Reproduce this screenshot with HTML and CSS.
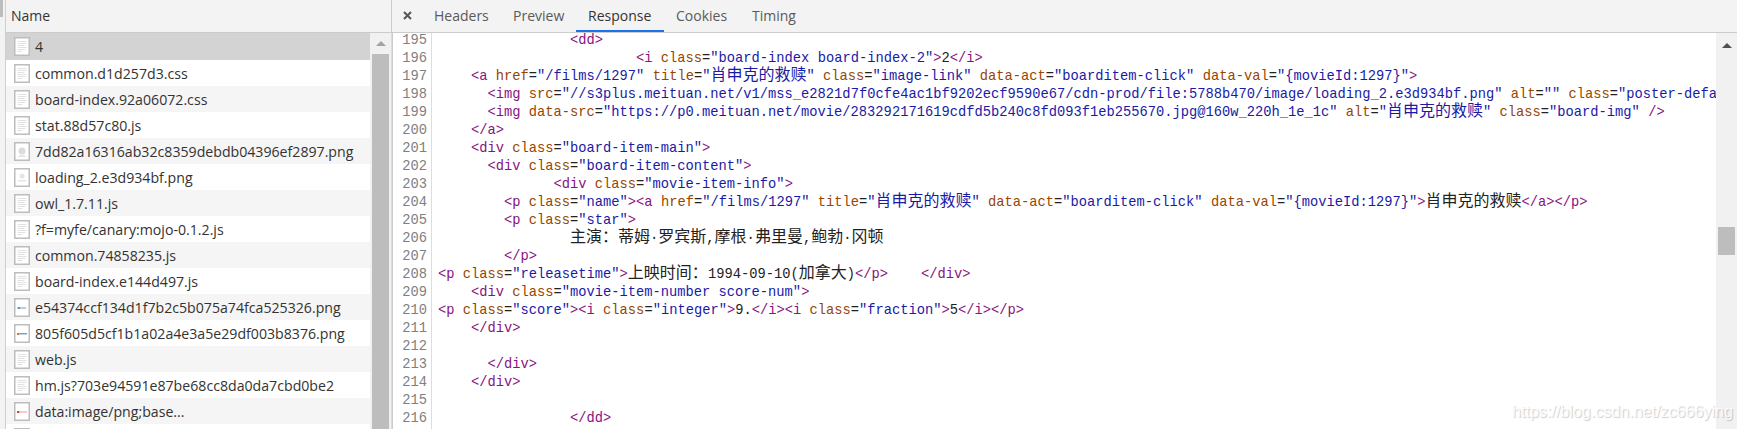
FILE: index.html
```html
<!DOCTYPE html>
<html lang="zh">
<head>
<meta charset="utf-8">
<title>Network Response</title>
<link rel="stylesheet" href="styles.css">
</head>
<body>
<svg class="defs" width="0" height="0" aria-hidden="true">
  <symbol id="doc" viewBox="0 0 16 19">
    <rect x=".75" y=".75" width="14.5" height="17.5" fill="#fff" stroke="#bdbdbd" stroke-width="1.5"/>
    <path d="M3.5 4.5h9M3.5 6.5h9M3.5 8.5h7M3.5 10.5h9M3.5 12.5h8M3.5 14.5h5" stroke="#e2e2e2" stroke-width="1" fill="none"/>
  </symbol>
  <symbol id="frame" viewBox="0 0 16 19">
    <rect x=".75" y=".75" width="14.5" height="17.5" fill="#fff" stroke="#bdbdbd" stroke-width="1.5"/>
  </symbol>
</svg>
<div class="strip"><div class="strip-mark"></div></div>
<section class="left">
  <header class="name-head">Name</header>
  <div class="list-wrap">
    <ul class="files">
      <li class="file selected"><svg class="ico"><use href="#doc"/></svg><span>4</span></li>
      <li class="file"><svg class="ico"><use href="#doc"/></svg><span>common.d1d257d3.css</span></li>
      <li class="file"><svg class="ico"><use href="#doc"/></svg><span>board-index.92a06072.css</span></li>
      <li class="file"><svg class="ico"><use href="#doc"/></svg><span>stat.88d57c80.js</span></li>
      <li class="file"><svg class="ico" viewBox="0 0 16 19"><use href="#frame"/><circle cx="8" cy="9" r="3.5" fill="#dcdcdc"/><path d="M4 15c1-3 7-3 8 0" fill="#e6e6e6"/></svg><span>7dd82a16316ab32c8359debdb04396ef2897.png</span></li>
      <li class="file"><svg class="ico" viewBox="0 0 16 19"><use href="#frame"/><circle cx="8" cy="8" r="2.5" fill="#e4e4e4"/><path d="M4 12h8v1.500H4z" fill="#e4e4e4"/></svg><span>loading_2.e3d934bf.png</span></li>
      <li class="file"><svg class="ico"><use href="#doc"/></svg><span>owl_1.7.11.js</span></li>
      <li class="file"><svg class="ico"><use href="#doc"/></svg><span>?f=myfe/canary:mojo-0.1.2.js</span></li>
      <li class="file"><svg class="ico"><use href="#doc"/></svg><span>common.74858235.js</span></li>
      <li class="file"><svg class="ico"><use href="#doc"/></svg><span>board-index.e144d497.js</span></li>
      <li class="file"><svg class="ico" viewBox="0 0 16 19"><use href="#frame"/><path d="M3.500 9h3v2h-3z" fill="#5a9fd4"/><path d="M7 9h5v2H7z" fill="#c9c9c9"/></svg><span>e54374ccf134d1f7b2c5b075a74fca525326.png</span></li>
      <li class="file"><svg class="ico" viewBox="0 0 16 19"><use href="#frame"/><path d="M3 9h2v2H3z" fill="#e8702a"/><path d="M5 9h8v1.500H5z" fill="#6ea6dc"/></svg><span>805f605d5cf1b1a02a4e3a5e29df003b8376.png</span></li>
      <li class="file"><svg class="ico"><use href="#doc"/></svg><span>web.js</span></li>
      <li class="file"><svg class="ico"><use href="#doc"/></svg><span>hm.js?703e94591e87be68cc8da0da7cbd0be2</span></li>
      <li class="file"><svg class="ico" viewBox="0 0 16 19"><use href="#frame"/><path d="M3 9h2.500v2H3z" fill="#e0403a"/><path d="M6 9.500h7v1H6z" fill="#ee9a96"/></svg><span>data:image/png;base...</span></li>
      <li class="file"><svg class="ico"><use href="#doc"/></svg></li>
    </ul>
    <div class="vbar list-bar">
      <div class="arrow pale"></div>
      <div class="thumb list-thumb"></div>
    </div>
  </div>
</section>
<section class="right">
  <nav class="tabs">
    <span class="close"><svg class="close-ico" viewBox="0 0 9 9"><path d="M1 1l7 7M8 1L1 8"/></svg></span>
    <span class="tab tab-headers">Headers</span>
    <span class="tab tab-preview">Preview</span>
    <span class="tab tab-response active">Response</span>
    <span class="tab tab-cookies">Cookies</span>
    <span class="tab tab-timing">Timing</span>
  </nav>
  <div class="editor">
    <div class="gutter">
      <div>195</div><div>196</div><div>197</div><div>198</div><div>199</div><div>200</div><div>201</div><div>202</div><div>203</div><div>204</div><div>205</div><div>206</div><div>207</div><div>208</div><div>209</div><div>210</div><div>211</div><div>212</div><div>213</div><div>214</div><div>215</div><div>216</div>
    </div>
    <div class="code">
      <div class="ln">                <i class="t">&lt;dd&gt;</i></div>
      <div class="ln">                        <i class="t">&lt;i</i> <i class="a">class</i>=<i class="v">"board-index board-index-2"</i><i class="t">&gt;</i>2<i class="t">&lt;/i&gt;</i></div>
      <div class="ln">    <i class="t">&lt;a</i> <i class="a">href</i>=<i class="v">"/films/1297"</i> <i class="a">title</i>=<i class="v">"<b>肖申克的救赎</b>"</i> <i class="a">class</i>=<i class="v">"image-link"</i> <i class="a">data-act</i>=<i class="v">"boarditem-click"</i> <i class="a">data-val</i>=<i class="v">"{movieId:1297}"</i><i class="t">&gt;</i></div>
      <div class="ln">      <i class="t">&lt;img</i> <i class="a">src</i>=<i class="v">"//s3plus.meituan.net/v1/mss_e2821d7f0cfe4ac1bf9202ecf9590e67/cdn-prod/file:5788b470/image/loading_2.e3d934bf.png"</i> <i class="a">alt</i>=<i class="v">""</i> <i class="a">class</i>=<i class="v">"poster-default"</i> <i class="t">/&gt;</i></div>
      <div class="ln">      <i class="t">&lt;img</i> <i class="a">data-src</i>=<i class="v">"https://p0.meituan.net/movie/283292171619cdfd5b240c8fd093f1eb255670.jpg@160w_220h_1e_1c"</i> <i class="a">alt</i>=<i class="v">"<b>肖申克的救赎</b>"</i> <i class="a">class</i>=<i class="v">"board-img"</i> <i class="t">/&gt;</i></div>
      <div class="ln">    <i class="t">&lt;/a&gt;</i></div>
      <div class="ln">    <i class="t">&lt;div</i> <i class="a">class</i>=<i class="v">"board-item-main"</i><i class="t">&gt;</i></div>
      <div class="ln">      <i class="t">&lt;div</i> <i class="a">class</i>=<i class="v">"board-item-content"</i><i class="t">&gt;</i></div>
      <div class="ln">              <i class="t">&lt;div</i> <i class="a">class</i>=<i class="v">"movie-item-info"</i><i class="t">&gt;</i></div>
      <div class="ln">        <i class="t">&lt;p</i> <i class="a">class</i>=<i class="v">"name"</i><i class="t">&gt;&lt;a</i> <i class="a">href</i>=<i class="v">"/films/1297"</i> <i class="a">title</i>=<i class="v">"<b>肖申克的救赎</b>"</i> <i class="a">data-act</i>=<i class="v">"boarditem-click"</i> <i class="a">data-val</i>=<i class="v">"{movieId:1297}"</i><i class="t">&gt;</i><b>肖申克的救赎</b><i class="t">&lt;/a&gt;&lt;/p&gt;</i></div>
      <div class="ln">        <i class="t">&lt;p</i> <i class="a">class</i>=<i class="v">"star"</i><i class="t">&gt;</i></div>
      <div class="ln">                <b>主演：蒂姆</b>·<b>罗宾斯</b>,<b>摩根</b>·<b>弗里曼</b>,<b>鲍勃</b>·<b>冈顿</b></div>
      <div class="ln">        <i class="t">&lt;/p&gt;</i></div>
      <div class="ln"><i class="t">&lt;p</i> <i class="a">class</i>=<i class="v">"releasetime"</i><i class="t">&gt;</i><b>上映时间：</b>1994-09-10(<b>加拿大</b>)<i class="t">&lt;/p&gt;</i>    <i class="t">&lt;/div&gt;</i></div>
      <div class="ln">    <i class="t">&lt;div</i> <i class="a">class</i>=<i class="v">"movie-item-number score-num"</i><i class="t">&gt;</i></div>
      <div class="ln"><i class="t">&lt;p</i> <i class="a">class</i>=<i class="v">"score"</i><i class="t">&gt;&lt;i</i> <i class="a">class</i>=<i class="v">"integer"</i><i class="t">&gt;</i>9.<i class="t">&lt;/i&gt;&lt;i</i> <i class="a">class</i>=<i class="v">"fraction"</i><i class="t">&gt;</i>5<i class="t">&lt;/i&gt;&lt;/p&gt;</i></div>
      <div class="ln">    <i class="t">&lt;/div&gt;</i></div>
      <div class="ln"> </div>
      <div class="ln">      <i class="t">&lt;/div&gt;</i></div>
      <div class="ln">    <i class="t">&lt;/div&gt;</i></div>
      <div class="ln"> </div>
      <div class="ln">                <i class="t">&lt;/dd&gt;</i></div>
    </div>
    <div class="vbar code-bar">
      <div class="arrow"></div>
      <div class="thumb code-thumb"></div>
    </div>
  </div>
</section>
<div class="watermark">https://blog.csdn.net/zc666ying</div>
</body>
</html>
```
FILE: styles.css
```css
* { box-sizing: border-box; margin: 0; padding: 0; }
html, body { width: 1737px; height: 429px; overflow: hidden; background: #fff; }
body { display: flex; font-family: "Open Sans", "Noto Sans", sans-serif; color: #333; position: relative; }
.defs { position: absolute; }

.strip { width: 6px; height: 429px; background: #f3f3f3; border-right: 1px solid #cfcfcf; }
.strip-mark { width: 3px; height: 17px; background: #bdbdbd; }

.left { width: 386px; height: 429px; display: flex; flex-direction: column; }
.name-head { height: 33px; flex: none; padding: 0 0 1px 5px; background: #f3f3f3; border-bottom: 1px solid #ccc; border-right: 1px solid #ccc; font-size: 14px; line-height: 32px; color: #333; }
.list-wrap { flex: 1; display: flex; min-height: 0; border-right: 1px solid #ddd; }
.files { list-style: none; width: 364px; flex: none; }
.file { height: 26px; display: flex; align-items: center; padding-left: 8px; font-size: 14.15px; white-space: nowrap; color: #333; background: #fff; }
.file:nth-child(odd) { background: #f5f5f5; }
.file.selected { height: 27px; background: #d3d3d3; }
.ico { width: 16px; height: 19px; flex: none; margin-right: 5px; }

.vbar { flex: 1; background: #f1f1f1; display: flex; flex-direction: column; align-items: center; }
.list-bar { padding-top: 8px; }
.arrow { width: 0; height: 0; border-left: 5px solid transparent; border-right: 5px solid transparent; border-bottom: 5px solid #505050; flex: none; }
.arrow.pale { border-bottom-color: #a3a3a3; }
.thumb { width: 17px; background: #bdbdbd; flex: none; }
.list-thumb { height: 375px; margin-top: 8px; }

.right { flex: 1; min-width: 0; height: 429px; display: flex; flex-direction: column; }
.tabs { height: 33px; flex: none; display: flex; background: #f3f3f3; border-bottom: 1px solid #ccc; font-size: 14px; line-height: 32px; color: #5a5a5a; }
.close { width: 30px; flex: none; display: flex; align-items: center; padding: 0 0 1px 11px; }
.close-ico { width: 9px; height: 9px; stroke: #555; stroke-width: 2; fill: none; }
.tab { height: 32px; padding: 0 12px; white-space: nowrap; }
.tab-headers { width: 79px; }
.tab-preview { width: 75px; }
.tab-response { width: 88px; }
.tab-cookies { width: 76px; }
.tab.active { color: #333; border-bottom: 2px solid #1a73e8; }

.editor { flex: 1; min-height: 0; display: flex; overflow: hidden; }
.gutter { width: 40px; flex: none; border-left: 1px solid #ccc; border-right: 1px solid #ddd; padding: 0 4px 0 0; text-align: right; font: 13.75px/18px "Liberation Mono", monospace; color: #808080; margin-top: -1px; }
.code { flex: 1; min-width: 0; overflow: hidden; padding: 0 0 0 6px; font: 13.75px/18px "Liberation Mono", monospace; color: #222; margin-top: -1px; }
.ln { height: 18px; white-space: pre; }
.t, .a, .v { font-style: normal; }
.t { color: #881280; }
.a { color: #994500; }
.v { color: #1a1aa6; }
b { font: 16px/0 "Noto Sans CJK SC", sans-serif; }
.code-bar { width: 21px; flex: none; padding-top: 10px; }
.code-thumb { height: 28px; margin-top: 179px; }

.watermark { position: absolute; left: 1512px; top: 400px; font: 16.1px/22px "Liberation Sans", sans-serif; color: rgba(255,255,255,.85); text-shadow: 1px 1px 1px rgba(0,0,0,.2); white-space: nowrap; }
```
